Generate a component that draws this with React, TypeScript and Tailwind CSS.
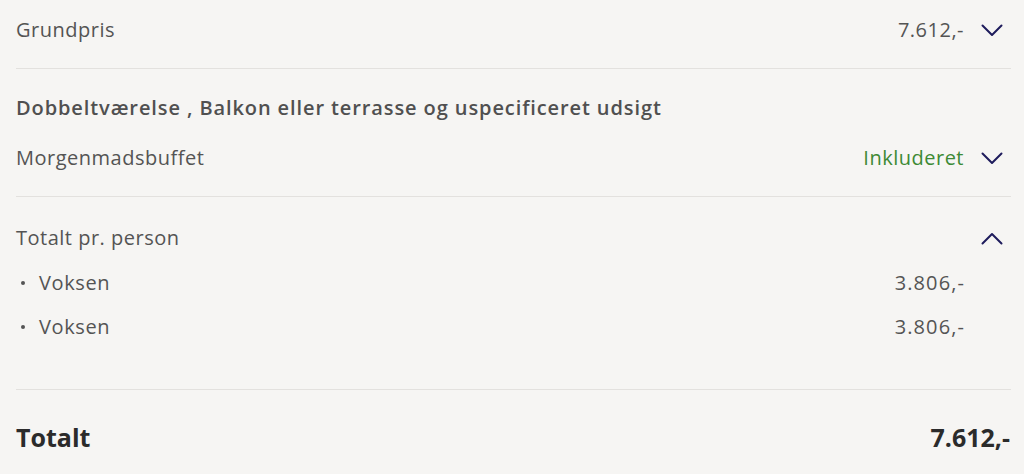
import React from "react";

const Chevron = ({ up = false }: { up?: boolean }) => (
  <svg width="22" height="13" viewBox="0 0 22 13" fill="none" className="shrink-0">
    <path
      d={up ? "M1.5 11.5 L11 2 L20.5 11.5" : "M1.5 1.5 L11 11 L20.5 1.5"}
      stroke="#1f1c5c"
      strokeWidth="2"
      strokeLinecap="round"
      strokeLinejoin="round"
    />
  </svg>
);

export default function App() {
  const font = { fontFamily: "'Open Sans', sans-serif" };
  return (
    <div className="w-[1024px] h-[474px] bg-[#f6f5f3] overflow-hidden" style={font}>
      <div className="ml-4 w-[995px] text-[#545454]">
        {/* Grundpris */}
        <div className="pt-[18px] pb-[26px] border-b border-[#e3e1de]">
          <div className="flex items-center h-6 text-[20px] tracking-[0.5px]">
            <span className="flex-1">Grundpris</span>
            <span>7.612,-</span>
            <span className="ml-[17px] mr-[8px]"><Chevron /></span>
          </div>
        </div>

        {/* Room */}
        <div className="pt-[27px] pb-[26px] border-b border-[#e3e1de]">
          <div className="h-6 flex items-center text-[20px] font-semibold tracking-[0.9px] text-[#505050]">
            Dobbeltværelse , Balkon eller terrasse og uspecificeret udsigt
          </div>
          <div className="mt-[26px] flex items-center h-6 text-[20px] tracking-[0.5px]">
            <span className="flex-1">Morgenmadsbuffet</span>
            <span className="text-[#3d8a35]">Inkluderet</span>
            <span className="ml-[17px] mr-[8px]"><Chevron /></span>
          </div>
        </div>

        {/* Per person */}
        <div className="pt-[29px] pb-[50px] border-b border-[#e3e1de]">
          <div className="flex items-center h-6 text-[20px] tracking-[0.5px]">
            <span className="flex-1">Totalt pr. person</span>
            <span className="ml-[17px] mr-[8px]"><Chevron up /></span>
          </div>
          <div className="mt-[21px] flex items-center h-6 text-[20px] tracking-[0.6px]">
            <span className="w-[23px] pl-[5px] flex items-center"><span className="block w-[4px] h-[4px] rounded-full bg-[#545454]" /></span>
            <span className="flex-1">Voksen</span>
            <span className="mr-[46px] tracking-[1.1px]">3.806,-</span>
          </div>
          <div className="mt-[20px] flex items-center h-6 text-[20px] tracking-[0.6px]">
            <span className="w-[23px] pl-[5px] flex items-center"><span className="block w-[4px] h-[4px] rounded-full bg-[#545454]" /></span>
            <span className="flex-1">Voksen</span>
            <span className="mr-[46px] tracking-[1.1px]">3.806,-</span>
          </div>
        </div>

        {/* Total */}
        <div className="pt-[34px]">
          <div className="flex items-center h-7 text-[25px] font-bold text-[#2b2b2b]">
            <span className="flex-1">Totalt</span>
            <span className="mr-[1px]">7.612,-</span>
          </div>
        </div>
      </div>
    </div>
  );
}
